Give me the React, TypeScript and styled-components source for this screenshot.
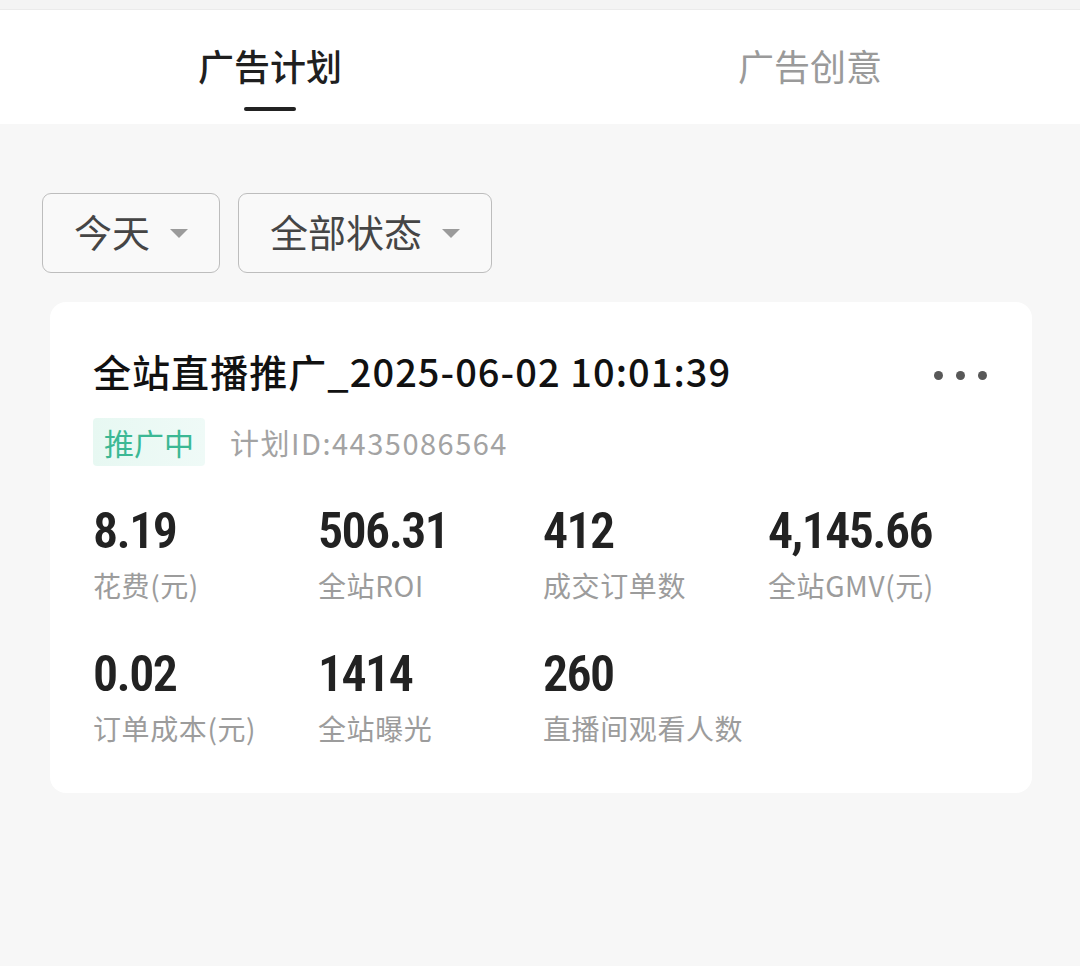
import React from 'react';
import styled, {createGlobalStyle} from 'styled-components';

const GlobalStyle = createGlobalStyle`
  body {
    margin: 0;
    background: #f7f7f7;
    font-family: "Noto Sans CJK SC", "Noto Sans", sans-serif;
  }
`;

const TopStrip = styled.div`
  height: 9px;
  background: #f4f4f4;
  border-bottom: 1px solid #ebebeb;
`;

const Header = styled.div`
  display: flex;
  background: #fff;
  height: 114px;
`;

const Tab = styled.div<{active?: boolean}>`
  flex: 1;
  display: flex;
  flex-direction: column;
  align-items: center;
  padding-top: 30px;
  font-size: 36px;
  line-height: 50px;
  font-weight: ${p => (p.active ? 500 : 400)};
  color: ${p => (p.active ? '#1f1f1f' : '#9a9a9a')};
`;

const TabBar = styled.div`
  margin-top: 17px;
  width: 52px;
  height: 4px;
  border-radius: 2px;
  background: #222;
`;

const Filters = styled.div`
  display: flex;
  gap: 18px;
  padding: 69px 0 0 42px;
`;

const FilterButton = styled.div`
  display: flex;
  align-items: center;
  gap: 20px;
  height: 80px;
  box-sizing: border-box;
  padding: 0 31px 6px;
  border: 1.5px solid #bdbdbd;
  border-radius: 9px;
  background: #f9f9f9;
  font-size: 38px;
  color: #454545;
`;

const Caret = styled.span`
  width: 0;
  height: 0;
  border-left: 9px solid transparent;
  border-right: 9px solid transparent;
  border-top: 9px solid #9b9b9b;
  margin-top: 6px;
`;

const Card = styled.div`
  margin: 29px 48px 0 50px;
  padding: 44px 43px 45px;
  background: #fff;
  border-radius: 16px;
`;

const TitleRow = styled.div`
  display: flex;
  align-items: center;
  justify-content: space-between;
`;

const Title = styled.div`
  font-size: 38px;
  line-height: 50px;
  font-weight: 500;
  letter-spacing: 1.05px;
  color: #111;
`;

const More = styled.div`
  display: flex;
  gap: 13px;
  margin-right: 2px;
  margin-top: 8px;
  & span {
    width: 9px;
    height: 9px;
    border-radius: 50%;
    background: #585858;
  }
`;

const MetaRow = styled.div`
  display: flex;
  align-items: center;
  gap: 25px;
  margin-top: 22px;
`;

const StatusTag = styled.span`
  height: 48px;
  padding: 0 11px;
  display: flex;
  align-items: center;
  border-radius: 4px;
  background: linear-gradient(90deg, #e7f8f2, #effaf7);
  color: #3bb894;
  font-size: 30px;
`;

const PlanId = styled.span`
  font-size: 29px;
  letter-spacing: 1.5px;
  color: #a3a3a3;
`;

const Grid = styled.div`
  display: grid;
  grid-template-columns: repeat(4, 225px);
  row-gap: 41px;
  margin-top: 37px;
`;

const Metric = styled.div`
  display: flex;
  flex-direction: column;
  gap: 6px;
`;

const Value = styled.div`
  font-family: "Roboto Condensed", Roboto, sans-serif;
  font-size: 50px;
  line-height: 56px;
  font-weight: 600;
  letter-spacing: -1.6px;
  color: #222;
`;

const Label = styled.div`
  font-size: 28px;
  line-height: 40px;
  letter-spacing: 0.6px;
  color: #9c9c9c;
`;

const metrics = [
  {value: '8.19', label: '花费(元)'},
  {value: '506.31', label: '全站ROI'},
  {value: '412', label: '成交订单数'},
  {value: '4,145.66', label: '全站GMV(元)'},
  {value: '0.02', label: '订单成本(元)'},
  {value: '1414', label: '全站曝光'},
  {value: '260', label: '直播间观看人数'},
];

export default function App() {
  return (
    <>
      <GlobalStyle />
      <TopStrip />
      <Header>
        <Tab active>
          广告计划
          <TabBar />
        </Tab>
        <Tab>广告创意</Tab>
      </Header>
      <Filters>
        <FilterButton>今天<Caret /></FilterButton>
        <FilterButton>全部状态<Caret /></FilterButton>
      </Filters>
      <Card>
        <TitleRow>
          <Title>全站直播推广_2025-06-02 10:01:39</Title>
          <More><span /><span /><span /></More>
        </TitleRow>
        <MetaRow>
          <StatusTag>推广中</StatusTag>
          <PlanId>计划ID:4435086564</PlanId>
        </MetaRow>
        <Grid>
          {metrics.map(m => (
            <Metric key={m.label}>
              <Value>{m.value}</Value>
              <Label>{m.label}</Label>
            </Metric>
          ))}
        </Grid>
      </Card>
    </>
  );
}
